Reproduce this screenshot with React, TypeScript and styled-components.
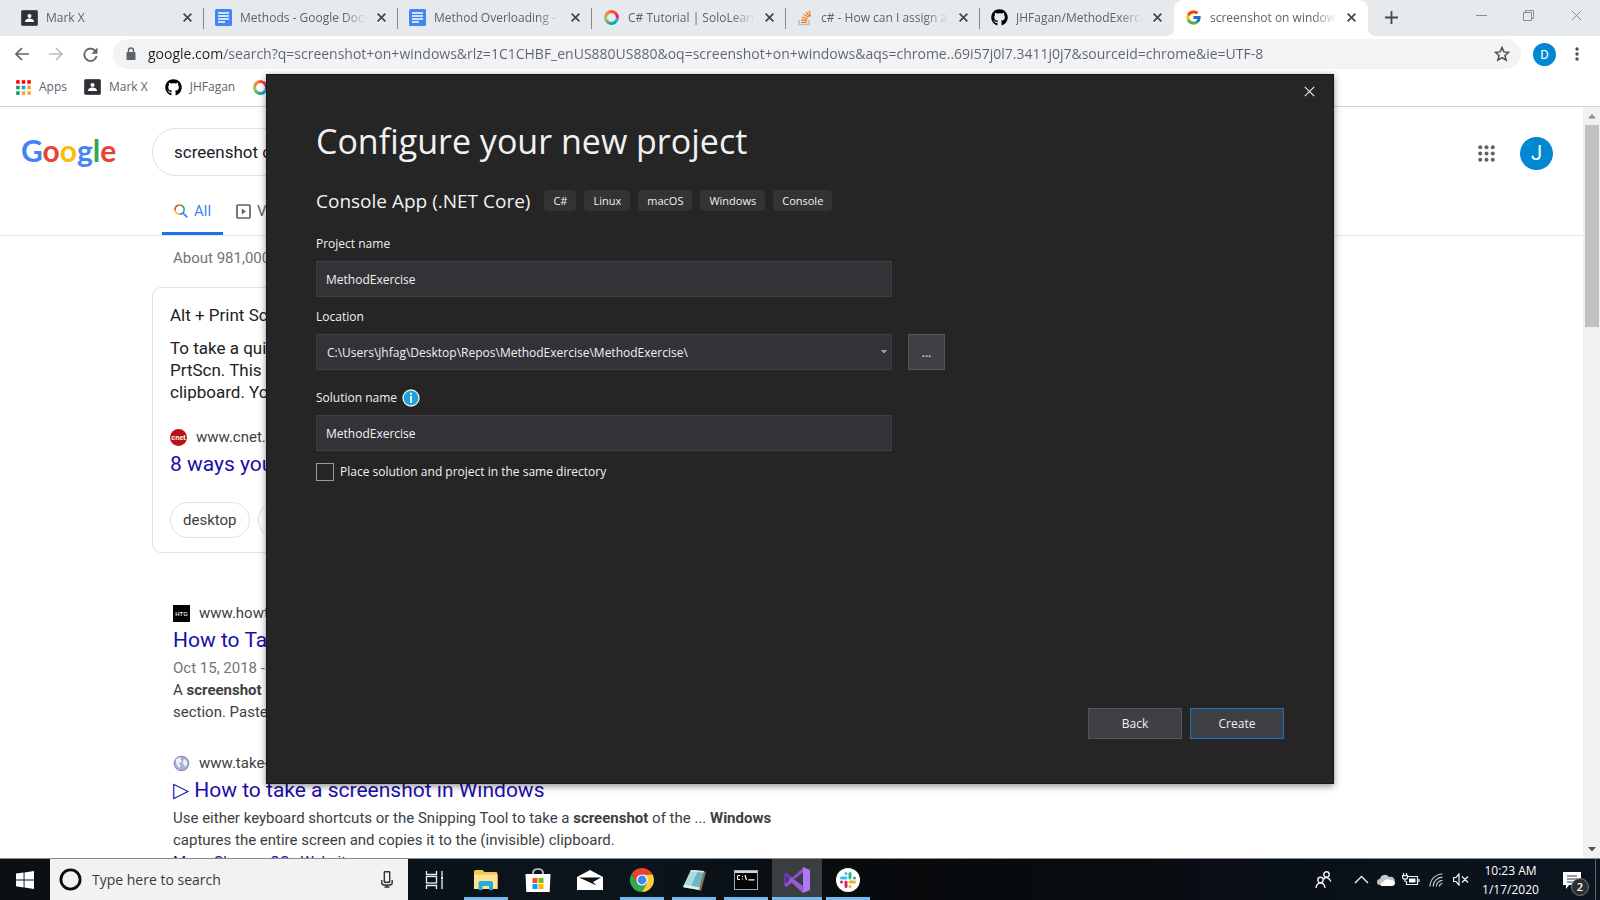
import React from "react";
import styled, { createGlobalStyle, css } from "styled-components";
import { FcGoogle } from "react-icons/fc";
import { FaGithub } from "react-icons/fa";

const segoe = `"Open Sans", "Noto Sans", sans-serif`;
const roboto = `Roboto, "Liberation Sans", sans-serif`;

const GlobalStyle = createGlobalStyle`
  * { box-sizing: border-box; }
  html, body { margin: 0; }
  body { font-family: ${segoe}; background: #fff; overflow: hidden; }
  button, input, select { font: inherit; margin: 0; }
  button { border: 0; padding: 0; background: none; cursor: pointer; }
  svg { display: block; flex: none; }
`;

const Desktop = styled.div`
  position: relative;
  display: flex;
  flex-direction: column;
  height: 100vh;
  min-height: 600px;
`;

/* ---------- Browser tabs ---------- */

const TabStrip = styled.nav`
  display: flex;
  flex: none;
  height: 36px;
  padding-left: 10px;
  background: #e7eaed;
`;

const Tab = styled.div<{ $active?: boolean; $plain?: boolean }>`
  position: relative;
  display: flex;
  align-items: center;
  flex: 0 1 194px;
  min-width: 0;
  gap: 8px;
  padding: 0 11px 1px;
  font-size: 12px;
  color: #5f6368;
  ${(p) =>
    !p.$active &&
    !p.$plain &&
    css`
      &::after {
        content: "";
        position: absolute;
        right: 0;
        top: 8px;
        height: 21px;
        width: 1px;
        background: #85898d;
      }
    `}
  ${(p) =>
    p.$active &&
    css`
      background: #fff;
      border-radius: 9px 9px 0 0;
      &::before,
      &::after {
        content: "";
        position: absolute;
        bottom: 0;
        width: 8px;
        height: 8px;
      }
      &::before {
        left: -8px;
        background: radial-gradient(circle at 0 0, #e7eaed 8px, #fff 8px);
      }
      &::after {
        right: -8px;
        background: radial-gradient(circle at 100% 0, #e7eaed 8px, #fff 8px);
      }
    `}
`;

const TabTitle = styled.a`
  flex: 1;
  min-width: 0;
  overflow: hidden;
  white-space: nowrap;
  line-height: 20px;
  color: inherit;
  text-decoration: none;
  mask-image: linear-gradient(90deg, #000 calc(100% - 24px), transparent);
`;

const IconButton = styled.button<{ $w?: number; $h?: number }>`
  display: flex;
  align-items: center;
  justify-content: center;
  flex: none;
  width: ${(p) => p.$w ?? 22}px;
  height: ${(p) => p.$h ?? 22}px;
`;

const WindowControls = styled.div`
  display: flex;
  margin-left: auto;
`;

/* ---------- Toolbar ---------- */

const Toolbar = styled.div`
  display: flex;
  align-items: center;
  flex: none;
  gap: 12px;
  height: 36px;
  padding: 0 14px 0 11px;
`;

const Omnibox = styled.form`
  display: flex;
  align-items: center;
  flex: 1;
  min-width: 0;
  height: 30px;
  padding: 0 11px;
  gap: 10px;
  border-radius: 15px;
  background: #f1f3f4;
`;

const UrlInput = styled.input`
  flex: 1;
  min-width: 0;
  padding: 0;
  border: 0;
  outline: 0;
  font-size: 14px;
  line-height: 24px;
  color: #5f6368;
  background: linear-gradient(90deg, #202124 76px, #5f6368 76px);
  background-clip: text;
  -webkit-text-fill-color: transparent;
`;

const Avatar = styled.button<{ $size: number }>`
  flex: none;
  width: ${(p) => p.$size}px;
  height: ${(p) => p.$size}px;
  border-radius: 50%;
  background: #0288d1;
  color: #fff;
  font-family: ${roboto};
  font-size: ${(p) => (p.$size > 30 ? 20 : 13)}px;
`;

const Bookmarks = styled.nav`
  display: flex;
  align-items: center;
  flex: none;
  height: 35px;
  padding: 0 16px 4px;
  gap: 17px;
  border-bottom: 1px solid #d0d2d8;
`;

const Bookmark = styled.a`
  display: flex;
  align-items: center;
  gap: 8px;
  font-size: 12px;
  line-height: 20px;
  color: #5f6368;
  text-decoration: none;
`;

/* ---------- Search page ---------- */

const Viewport = styled.div`
  display: flex;
  flex: 1;
  min-height: 0;
`;

const Page = styled.main`
  flex: 1;
  min-width: 0;
  overflow: hidden;
  font-family: ${roboto};
`;

const PageHeader = styled.header`
  display: grid;
  grid-template-columns: 152px 1fr auto;
  border-bottom: 1px solid #e4e6e9;
  padding: 21px 30px 0 0;
`;

const Logo = styled.a`
  padding-left: 21px;
  font-family: Lato, sans-serif;
  font-size: 30px;
  font-weight: 700;
  line-height: 44px;
  text-decoration: none;
`;

const LogoLetter = styled.span<{ $color: string }>`
  color: ${(p) => p.$color};
`;

const SearchBox = styled.input`
  width: 100%;
  max-width: 808px;
  height: 48px;
  padding: 0 21px;
  border: 1px solid #dfe1e5;
  border-radius: 24px;
  outline: 0;
  font-size: 17px;
  color: #202124;
`;

const HeaderTools = styled.div`
  display: flex;
  align-items: center;
  gap: 23px;
  height: 50px;
`;

const SearchTabs = styled.nav`
  grid-column: 2;
  display: flex;
  gap: 1px;
  padding: 10px 0 0 10px;
`;

const SearchTab = styled.a<{ $active?: boolean }>`
  display: flex;
  align-items: center;
  gap: 6px;
  height: 47px;
  padding: 2px 12px 0;
  border-bottom: 3px solid ${(p) => (p.$active ? "#1a73e8" : "transparent")};
  font-size: 15px;
  color: ${(p) => (p.$active ? "#4285f4" : "#5f6368")};
  text-decoration: none;
`;

const Results = styled.section`
  width: 916px;
  max-width: 100%;
  padding-left: 152px;
`;

const Stats = styled.p`
  margin: 11px 0 18px 21px;
  font-size: 15px;
  line-height: 22px;
  color: #70757a;
`;

const Card = styled.article`
  height: 266px;
  padding: 16px 17px;
  border: 1px solid #dfe1e5;
  border-radius: 9px;
`;

const CardText = styled.p`
  margin: 0 0 11px;
  font-size: 17px;
  line-height: 22px;
  color: #222;
`;

const Source = styled.div`
  display: flex;
  align-items: center;
  gap: 9px;
  font-size: 15px;
  line-height: 24px;
  color: #3c4043;
`;

const ResultTitle = styled.a`
  display: block;
  font-size: 21px;
  line-height: 30px;
  color: #1a0dab;
  text-decoration: none;
`;

const CardSource = styled.div`
  padding-top: 11px;
`;

const Chips = styled.div`
  display: flex;
  gap: 8px;
  margin-top: 23px;
`;

const Chip = styled.button`
  height: 36px;
  padding: 0 12px;
  border: 1px solid #dfe1e5;
  border-radius: 18px;
  font-size: 15px;
  color: #3c4043;
`;

const Result = styled.article<{ $first?: boolean }>`
  margin: ${(p) => (p.$first ? 48 : 28)}px 0 0 21px;
`;

const Snippet = styled.p`
  margin: 2px 0 0;
  font-size: 15px;
  line-height: 22px;
  color: #3c4043;
`;

const Dim = styled.span`
  color: #70757a;
`;

const SiteLink = styled.a`
  color: #1a0dab;
  text-decoration: none;
`;

const Scrollbar = styled.div`
  display: flex;
  flex-direction: column;
  align-items: center;
  flex: none;
  width: 17px;
  background: #f1f1f1;
`;

const Thumb = styled.div`
  width: 14px;
  height: 202px;
  margin-bottom: auto;
  background: #c1c1c1;
`;

/* ---------- Project dialog ---------- */

const Dialog = styled.section`
  position: absolute;
  top: 74px;
  left: 0;
  right: 0;
  display: flex;
  flex-direction: column;
  width: 1068px;
  max-width: 100%;
  min-height: 710px;
  margin: 0 auto;
  padding: 4px 49px 44px;
  border: 1px solid #17171b;
  background: #252526;
  color: #f1f1f1;
  box-shadow: 0 2px 7px rgba(0, 0, 0, 0.45);
`;

const DialogTop = styled.div`
  display: flex;
  justify-content: flex-end;
  margin-right: -37px;
`;

const Heading = styled.h1`
  margin: 13px 0 20px;
  font-size: 34px;
  font-weight: 400;
  line-height: 50px;
`;

const TemplateRow = styled.div`
  display: flex;
  align-items: center;
  gap: 14px;
`;

const TemplateName = styled.h2`
  margin: 0;
  font-size: 19px;
  font-weight: 400;
  line-height: 30px;
`;

const Tags = styled.ul`
  display: flex;
  gap: 8px;
  margin: 0;
  padding: 0 0 2px;
  list-style: none;
`;

const Tag = styled.li`
  padding: 0 9px;
  border-radius: 4px;
  background: #333334;
  font-size: 11px;
  line-height: 21px;
`;

const FieldLabel = styled.label<{ $top: number }>`
  display: flex;
  align-items: center;
  gap: 5px;
  margin: ${(p) => p.$top}px 0 6px;
  font-size: 12px;
  line-height: 22px;
`;

const FieldRow = styled.div`
  display: flex;
  gap: 16px;
`;

const field = css`
  width: 576px;
  max-width: 100%;
  height: 36px;
  padding: 0 9px;
  border: 1px solid #3f3f46;
  border-radius: 0;
  outline: 0;
  background-color: #333337;
  color: #f1f1f1;
  font-size: 12px;
`;

const TextField = styled.input`
  ${field}
`;

const SelectField = styled.select`
  ${field}
  padding: 0 10px;
  appearance: none;
  background-image: linear-gradient(to bottom left, #999 50%, transparent 50%),
    linear-gradient(to bottom right, #999 50%, transparent 50%);
  background-size: 3px 4px;
  background-position: right 7px center, right 4px center;
  background-repeat: no-repeat;
`;

const DialogButton = styled.button<{ $w: number; $h: number; $primary?: boolean }>`
  width: ${(p) => p.$w}px;
  height: ${(p) => p.$h}px;
  border: 1px solid ${(p) => (p.$primary ? "#1a74c4" : "#555558")};
  background: #3f3f46;
  color: #f1f1f1;
  font-size: 12px;
`;

const CheckRow = styled.label`
  display: flex;
  align-items: center;
  gap: 6px;
  margin-top: 10px;
  font-size: 12px;
  line-height: 22px;
`;

const CheckBox = styled.input`
  appearance: none;
  width: 18px;
  height: 18px;
  border: 1px solid #999;
  background: #252526;
`;

const DialogActions = styled.div`
  display: flex;
  justify-content: flex-end;
  gap: 8px;
  margin-top: auto;
`;

/* ---------- Taskbar ---------- */

const Taskbar = styled.footer`
  display: flex;
  flex: none;
  height: 42px;
  border-top: 1px solid #8a8c8e;
  background: linear-gradient(90deg, #0a1014, #0b151c 40%, #07090b 57%, #0b1520);
  color: #fff;
`;

const TaskSearch = styled.label`
  display: flex;
  align-items: center;
  flex: none;
  width: 358px;
  padding: 0 15px 0 9px;
  gap: 10px;
  background: #f2f2f2;
`;

const TaskInput = styled.input`
  flex: 1;
  min-width: 0;
  padding: 0;
  border: 0;
  outline: 0;
  background: none;
  font-size: 14px;
  &::placeholder {
    color: #3a3a3a;
    opacity: 1;
  }
`;

const TaskApps = styled.div`
  display: flex;
`;

const TaskButton = styled.button<{ $open?: boolean; $active?: boolean }>`
  display: flex;
  align-items: center;
  justify-content: center;
  width: ${(p) => (p.$active ? 50 : 44)}px;
  margin: 0 ${(p) => (p.$active ? 0 : 4)}px;
  padding-top: 3px;
  border-bottom: 3px solid ${(p) => (p.$open ? "#76b9ed" : "transparent")};
  background: ${(p) => (p.$active ? "#3b3e40" : "transparent")};
`;

const Tray = styled.div`
  display: flex;
  align-items: center;
  gap: 5px;
  margin-left: auto;
`;

const Clock = styled.time`
  width: 69px;
  font-size: 12px;
  line-height: 19px;
  text-align: center;
  white-space: nowrap;
`;

const Notices = styled.button`
  position: relative;
  width: 34px;
  height: 30px;
  margin-left: 6px;
  padding: 3px 0 0 7px;
`;

const Badge = styled.span`
  position: absolute;
  right: 1px;
  bottom: -1px;
  width: 18px;
  height: 18px;
  border: 1px solid #777;
  border-radius: 50%;
  background: #2b2f33;
  color: #fff;
  font-size: 11px;
  font-weight: 600;
  line-height: 16px;
  text-align: center;
`;

const ShowDesktop = styled.button`
  align-self: stretch;
  width: 5px;
  border-left: 1px solid #59636b;
`;

/* ---------- Icons ---------- */

const ClassroomIcon = () => (
  <svg width="17" height="16" viewBox="0 0 17 16">
    <rect x="0.5" y="0.5" width="16" height="15" rx="1" fill="#2e3136" stroke="#4d5156" />
    <circle cx="8.500" cy="6" r="2" fill="#fff" />
    <path d="M4 12c0-2.500 2.500-3.400 4.500-3.400S13 9.500 13 12z" fill="#fff" />
  </svg>
);
const DocsIcon = () => (
  <svg width="17" height="17" viewBox="0 0 17 17">
    <rect width="17" height="17" rx="1.500" fill="#4285f4" />
    <path d="M3 4h11M3 7h11M3 10h11M3 13h7" stroke="#fff" strokeWidth="1.500" />
  </svg>
);
const SwirlIcon = () => (
  <svg width="17" height="17" viewBox="0 0 17 17" fill="none" strokeWidth="2.600">
    {["#ff7043", "#f4511e", "#ec407a", "#e91e63", "#29b6f6", "#00acc1", "#26a69a", "#66bb6a", "#9ccc65", "#f0883e"].map((c, i) => (
      <path key={c} d="M6 3.800q2.800-2.400 6.400-.2" stroke={c} transform={`rotate(${i * 36 - 20} 8.500 8.500)`} />
    ))}
  </svg>
);
const StackIcon = () => (
  <svg width="16" height="16" viewBox="0 0 16 16" fill="none">
    <path d="M2 10v4.500h10V10" stroke="#bcbbbb" strokeWidth="1.500" />
    <path d="M4 12.300h6M4.100 9.900l6 .6M4.900 7.200l5.700 1.600M6.500 4.300l5 3M9 1.800l3.500 4.700M12.200.8l1.200 5.600" stroke="#f48024" strokeWidth="1.300" />
  </svg>
);
const Cross = ({ size = 9, color = "#45494d", weight = 1.8 }: { size?: number; color?: string; weight?: number }) => (
  <svg width={size} height={size} viewBox="0 0 10 10">
    <path d="M0.700 0.700l8.600 8.600M9.300 0.700l-8.600 8.600" stroke={color} strokeWidth={(weight * 10) / size} />
  </svg>
);
const Arrow = ({ color, flip }: { color: string; flip?: boolean }) => (
  <svg width="14" height="14" viewBox="0 0 14 14" fill="none" stroke={color} strokeWidth="1.700">
    <path d={flip ? "M0 7h13M7 1l6 6-6 6" : "M14 7H1M7 1L1 7l6 6"} />
  </svg>
);
const ReloadIcon = () => (
  <svg width="15" height="15" viewBox="0 0 15 15" fill="none">
    <path d="M12.600 4.200A6.200 6.200 0 1 0 13.600 8.800" stroke="#5f6368" strokeWidth="1.800" />
    <path d="M14.500 0.500v6.200H8.300z" fill="#5f6368" />
  </svg>
);
const LockIcon = () => (
  <svg width="14" height="14" viewBox="0 0 14 14">
    <rect x="2.500" y="5" width="9" height="8" rx="1" fill="#5f6368" />
    <path d="M4.500 5.500V3.500a2.500 2.500 0 0 1 5 0v2" fill="none" stroke="#5f6368" strokeWidth="1.400" />
  </svg>
);
const StarIcon = () => (
  <svg width="16" height="16" viewBox="0 0 16 16">
    <path d="M8 1.500l1.900 4.400 4.700.4-3.600 3.100 1.100 4.700L8 11.600l-4.100 2.500L5 9.400 1.400 6.300l4.700-.4z" fill="none" stroke="#4a4d51" strokeWidth="1.500" />
  </svg>
);
const MoreIcon = () => (
  <svg width="4" height="16" viewBox="0 0 4 16" fill="#4a4d51">
    <circle cx="2" cy="3" r="1.700" /><circle cx="2" cy="8" r="1.700" /><circle cx="2" cy="13" r="1.700" />
  </svg>
);
const DotGrid = ({ size, colors, square }: { size: number; colors: string[]; square?: boolean }) => (
  <svg width={size} height={size} viewBox="0 0 17 17">
    {colors.map((c, i) => (
      <rect key={i} x={(i % 3) * 6.3 + 0.2} y={Math.floor(i / 3) * 6.3 + 0.2} width="4" height="4" rx={square ? 0 : 2} fill={c} />
    ))}
  </svg>
);
const LensIcon = () => (
  <svg width="14" height="14" viewBox="0 0 14 14" fill="none" strokeWidth="1.700">
    <path d="M1 6A4.600 4.600 0 0 1 5.500 1" stroke="#ea4335" />
    <path d="M5.500 1A4.600 4.600 0 0 1 10.200 5.600" stroke="#34a853" />
    <path d="M10.200 5.600A4.600 4.600 0 0 1 5.600 10.200M8.800 8.800l4.600 4.600" stroke="#4285f4" />
    <path d="M5.600 10.200A4.600 4.600 0 0 1 1 6" stroke="#fbbc05" />
  </svg>
);
const VideoIcon = () => (
  <svg width="15" height="15" viewBox="0 0 15 15">
    <rect x="1" y="1" width="13" height="13" rx="1" fill="none" stroke="#5f6368" strokeWidth="1.700" />
    <path d="M5.800 4.500v6l4.200-3z" fill="#5f6368" />
  </svg>
);
const CnetIcon = () => (
  <svg width="17" height="17" viewBox="0 0 17 17">
    <circle cx="8.500" cy="8.500" r="8.500" fill="#b71216" />
    <text x="8.500" y="11" fontSize="7" fontWeight="700" textAnchor="middle" fill="#fff" fontFamily="Liberation Sans">cnet</text>
  </svg>
);
const HtgIcon = () => (
  <svg width="17" height="17" viewBox="0 0 17 17">
    <rect width="17" height="17" fill="#000" />
    <text x="8.500" y="11" fontSize="6" fontWeight="700" textAnchor="middle" fill="#ddd" fontFamily="Liberation Sans">HTG</text>
  </svg>
);
const GlobeIcon = () => (
  <svg width="17" height="17" viewBox="0 0 17 17">
    <circle cx="8.500" cy="8.500" r="7.200" fill="#a9b2d6" stroke="#8790bd" strokeWidth="1.200" />
    <path d="M3 4.500c2-2 4-2.300 5-2l-.5 2L9 6 7 8 5.500 8l2 2.500L6.500 13C4 11 2.500 8 3 4.500zM11 4l2.500 1.500 1 3-2 3.500-1.500-2-1.500-2z" fill="#eff1fa" />
  </svg>
);
const InfoIcon = () => (
  <svg width="18" height="18" viewBox="0 0 18 18">
    <circle cx="9" cy="9" r="8" fill="#1ba1e2" stroke="#f1f1f1" strokeWidth="1.300" />
    <path d="M9 3.800v2M9 7v7" stroke="#fff" strokeWidth="2" />
  </svg>
);
const WindowsIcon = () => (
  <svg width="18" height="18" viewBox="0 0 18 18" fill="#fff">
    <path d="M0 2.600L7.600 1.500v7H0zM8.500 1.400L18 0v8.500H8.500zM0 9.400h7.600v7L0 15.300zM8.500 9.400H18V18l-9.500-1.400z" />
  </svg>
);
const CortanaIcon = () => (
  <svg width="23" height="23" viewBox="0 0 23 23">
    <circle cx="11.500" cy="11.500" r="9.600" fill="none" stroke="#0c0c0c" strokeWidth="2.800" />
  </svg>
);
const MicIcon = () => (
  <svg width="12" height="17" viewBox="0 0 12 17" fill="none" stroke="#333" strokeWidth="1.400">
    <rect x="3.300" y="0.800" width="5.400" height="10.500" rx="0.500" />
    <path d="M0.800 9v2.500c0 1.500 1 2.500 2.500 2.500h5.400c1.500 0 2.500-1 2.500-2.500V9M6 14v1.700M3.500 16h5" />
  </svg>
);
const TaskViewIcon = () => (
  <svg width="19" height="18" viewBox="0 0 19 18" fill="none" stroke="#f0f0f0" strokeWidth="1.300">
    <path d="M1.500 0v3.500h10V0M1.500 18v-3.500h10V18M17 0v5M17 9v9" />
    <rect x="1.500" y="5.500" width="10" height="6.500" />
    <rect x="16" y="5.500" width="2" height="3" fill="#f0f0f0" stroke="none" />
  </svg>
);
const ExplorerIcon = () => (
  <svg width="24" height="20" viewBox="0 0 24 20">
    <path d="M0 1.500Q0 0 1.500 0h7l2 2H22q1.500 0 1.500 1.500V19H0z" fill="#f3c74f" />
    <path d="M0 4.500h23.500V19H0z" fill="#ffe391" />
    <path d="M4.500 20v-7q0-2 2-2h10.500q2 0 2 2v7h-4v-4H8.500v4z" fill="#29abe2" />
  </svg>
);
const StoreIcon = () => (
  <svg width="26" height="24" viewBox="0 0 26 24">
    <path d="M8 7V5q0-4 5-4t5 4v2" fill="none" stroke="#c9cccf" strokeWidth="1.700" />
    <path d="M0.500 6h25l-.8 18H1.300z" fill="#fff" />
    <path d="M7.500 10h5v5h-5z" fill="#f25022" /><path d="M13.500 10h5v5h-5z" fill="#7fba00" />
    <path d="M7.500 16h5v5h-5z" fill="#00a4ef" /><path d="M13.500 16h5v5h-5z" fill="#ffb900" />
  </svg>
);
const MailIcon = () => (
  <svg width="26" height="20" viewBox="0 0 26 20">
    <path d="M0 7L13 0l13 7v13H0z" fill="#fff" />
    <path d="M2 7.500h22l-8 4.500 3.500 3.500z" fill="#0b1116" />
  </svg>
);
const ChromeIcon = () => (
  <svg width="24" height="24" viewBox="0 0 24 24">
    <path d="M12 6.500h10.700L22.400 6A12 12 0 0 0 1.600 6L7 15z" fill="#ea4335" />
    <path d="M1.600 6A12 12 0 0 0 12 24l5-9-10 0z" fill="#34a853" />
    <path d="M12 24A12 12 0 0 0 22.700 6.600H12L17 15z" fill="#fbcd3a" />
    <circle cx="12" cy="12" r="5.600" fill="#fff" /><circle cx="12" cy="12" r="4.400" fill="#4285f4" />
  </svg>
);
const NotepadIcon = () => (
  <svg width="24" height="24" viewBox="0 0 24 24">
    <path d="M21 3l3 1-5 19-3-1z" fill="#8a6b4a" />
    <path d="M9 2l13 1-5 19L1 19z" fill="#6fb5c4" />
    <path d="M9 2l7 .5L8 20.500 1 19z" fill="#a8dbe4" />
    <path d="M1 19l16 3 .6-2.500L3 16.500z" fill="#e3eef0" />
    <path d="M9 2l13 1-.4 1.500L8.300 3.500z" fill="#dfe6e8" />
  </svg>
);
const TerminalIcon = () => (
  <svg width="24" height="20" viewBox="0 0 24 20">
    <rect x="0.500" y="0.500" width="23" height="19" fill="#050505" stroke="#a5a8aa" />
    <path d="M1 2h22" stroke="#d5d8da" strokeWidth="2" />
    <path d="M6 5.500H4.500q-1 0-1 1.300v1.400q0 1.300 1 1.300H6M8.500 6v1M8.500 8.500v1M11 5l1.500 5M14.500 9.800h6" stroke="#fff" strokeWidth="1.200" fill="none" />
  </svg>
);
const StudioIcon = () => (
  <svg width="26" height="26" viewBox="0 0 26 26">
    <path d="M0 7l2-1.500L20 20v4z" fill="#7b3fb5" />
    <path d="M0 7l2.500-1.500V20L0 18z" fill="#6a35a3" />
    <path d="M2.500 20L20 6V0L0 18z" fill="#8e52cc" />
    <path d="M19 0l7 3v20l-7 3z" fill="#b179f1" />
    <path d="M9 13l10-7.500v15z" fill="#3b3e40" />
    <path d="M19 26L4.500 12.800l3-2.300L20 20z" fill="#9a5cd8" />
  </svg>
);
const SlackIcon = () => (
  <svg width="24" height="24" viewBox="0 0 24 24" strokeLinecap="round" strokeWidth="3">
    <circle cx="12" cy="12" r="12" fill="#fff" />
    <path d="M10 5.500v.1M5.500 10H10" stroke="#36c5f0" />
    <path d="M14 5.500V10M18.500 10h-.1" stroke="#2eb67d" />
    <path d="M14 14h4.500M14 18.500v-.1" stroke="#ecb22e" />
    <path d="M10 14v4.500M5.500 14h.1" stroke="#e01e5a" />
  </svg>
);
const PeopleIcon = () => (
  <svg width="17" height="18" viewBox="0 0 17 18" fill="none" stroke="#f0f0f0" strokeWidth="1.400">
    <circle cx="11.500" cy="3.500" r="2.700" /><circle cx="5.500" cy="9" r="2.700" />
    <path d="M8.500 8.500q1-2 3-2t4.500 4M1 17q.5-5 4.500-5t4.500 5" />
  </svg>
);
const ChevronIcon = () => (
  <svg width="15" height="9" viewBox="0 0 15 9" fill="none" stroke="#f0f0f0" strokeWidth="1.400">
    <path d="M1 8l6.500-6.500L14 8" />
  </svg>
);
const CloudIcon = () => (
  <svg width="18" height="12" viewBox="0 0 18 12">
    <path d="M3 11a3 3 0 0 1 0-6A5 5 0 0 1 12 3a4 4 0 0 1 3 8z" fill="#c4c7ca" />
    <path d="M4 12q-1.500-3 2-4 3-4 7-2 5 0 5 3.500-.5 2.500-3 2.500z" fill="#fff" />
  </svg>
);
const BatteryIcon = () => (
  <svg width="18" height="13" viewBox="0 0 18 13" fill="none" stroke="#f0f0f0" strokeWidth="1.200">
    <path d="M6 3.500h9.500v8H4.500V8M17 6v3M1.500 0v2.500M4.500 0v2.500M.6 2.700h5v2q-.5 1.500-2.500 1.500T.6 4.700zM3 6v3" />
    <path d="M7 5.500h6.500v4H7z" fill="#fff" stroke="none" />
  </svg>
);
const WifiIcon = () => (
  <svg width="15" height="14" viewBox="0 0 15 14" fill="none" stroke="#c8cbcd" strokeWidth="1.200">
    <path d="M1 13.500A12.500 12.500 0 0 1 13.500 1M4.200 13.500a9.300 9.300 0 0 1 9.300-9.300M7.400 13.500a6.100 6.100 0 0 1 6.100-6.100M10.500 13.500a3 3 0 0 1 3-3" />
  </svg>
);
const MutedIcon = () => (
  <svg width="17" height="13" viewBox="0 0 17 13" fill="none" stroke="#f0f0f0" strokeWidth="1.200">
    <path d="M.6 4.500H3L6 1v11L3 8.500H.6zM9 3.500l6 6M15 3.500l-6 6" />
  </svg>
);
const NoteIcon = () => (
  <svg width="19" height="18" viewBox="0 0 19 18">
    <path d="M0 0h18v13H6l-3 4v-4H0z" fill="#fff" />
    <path d="M4 4h10M4 7h10M4 10h7" stroke="#333" strokeWidth="1" />
  </svg>
);
const Caret = ({ down }: { down?: boolean }) => (
  <svg width="8" height="5" viewBox="0 0 8 5"><path d={down ? "M0 0h8L4 4.500z" : "M0 4.500h8L4 0z"} fill={down ? "#505050" : "#8a8a8a"} /></svg>
);

/* ---------- Data ---------- */

const tabs = [
  { title: "Mark X", icon: <ClassroomIcon /> },
  { title: "Methods - Google Docs", icon: <DocsIcon /> },
  { title: "Method Overloading - Goo", icon: <DocsIcon /> },
  { title: "C# Tutorial | SoloLearn: Le", icon: <SwirlIcon /> },
  { title: "c# - How can I assign a va", icon: <StackIcon /> },
  { title: "JHFagan/MethodExercise", icon: <FaGithub size={17} color="#000" />, plain: true },
  { title: "screenshot on windows -", icon: <FcGoogle size={17} />, active: true },
];

const logo: [string, string][] = [
  ["G", "#4285f4"], ["o", "#ea4335"], ["o", "#fbbc05"], ["g", "#4285f4"], ["l", "#34a853"], ["e", "#ea4335"],
];

const appColors = ["#f00", "#f00", "#f00", "#0f9d58", "#2196f3", "#f9a825", "#0f9d58", "#f9a825", "#f9a825"];

const apps = [
  { name: "Task View", icon: <TaskViewIcon /> },
  { name: "File Explorer", icon: <ExplorerIcon />, open: true },
  { name: "Store", icon: <StoreIcon /> },
  { name: "Mail", icon: <MailIcon /> },
  { name: "Chrome", icon: <ChromeIcon />, open: true },
  { name: "Notepad", icon: <NotepadIcon />, open: true },
  { name: "Command Prompt", icon: <TerminalIcon />, open: true },
  { name: "Visual Studio", icon: <StudioIcon />, open: true, active: true },
  { name: "Slack", icon: <SlackIcon />, open: true },
];

const url =
  "google.com/search?q=screenshot+on+windows&rlz=1C1CHBF_enUS880US880&oq=screenshot+on+windows&aqs=chrome..69i57j0l7.3411j0j7&sourceid=chrome&ie=UTF-8";

/* ---------- Sections ---------- */

const BrowserChrome = () => (
  <>
    <TabStrip aria-label="Tabs">
      {tabs.map((t) => (
        <Tab key={t.title} $active={t.active} $plain={t.plain}>
          {t.icon}
          <TabTitle href="#">{t.title}</TabTitle>
          <IconButton $w={12} aria-label="Close tab"><Cross /></IconButton>
        </Tab>
      ))}
      <IconButton $w={46} $h={35} aria-label="New tab">
        <svg width="13" height="13" viewBox="0 0 13 13"><path d="M6.500 0v13M0 6.500h13" stroke="#45494d" strokeWidth="1.800" /></svg>
      </IconButton>
      <WindowControls>
        <IconButton $w={47} $h={31} aria-label="Minimize">
          <svg width="11" height="10" viewBox="0 0 11 10"><path d="M0 4.500h11" stroke="#8b8e91" /></svg>
        </IconButton>
        <IconButton $w={47} $h={31} aria-label="Restore">
          <svg width="11" height="11" viewBox="0 0 11 11" fill="none" stroke="#8b8e91"><path d="M2.500 2.500v-2h8v8h-2M.5 2.500h8v8h-8z" /></svg>
        </IconButton>
        <IconButton $w={48} $h={31} aria-label="Close window"><Cross size={11} color="#8b8e91" weight={1} /></IconButton>
      </WindowControls>
    </TabStrip>
    <Toolbar>
      <IconButton aria-label="Back"><Arrow color="#5f6368" /></IconButton>
      <IconButton aria-label="Forward"><Arrow color="#bbbdbf" flip /></IconButton>
      <IconButton aria-label="Reload"><ReloadIcon /></IconButton>
      <Omnibox>
        <LockIcon />
        <UrlInput aria-label="Address" defaultValue={url} />
        <IconButton $w={16} type="button" aria-label="Bookmark this page"><StarIcon /></IconButton>
      </Omnibox>
      <Avatar $size={23} aria-label="Profile D">D</Avatar>
      <IconButton $w={18} aria-label="Menu"><MoreIcon /></IconButton>
    </Toolbar>
    <Bookmarks aria-label="Bookmarks">
      <Bookmark href="#"><DotGrid size={15} colors={appColors} square />Apps</Bookmark>
      <Bookmark href="#"><ClassroomIcon />Mark X</Bookmark>
      <Bookmark href="#"><FaGithub size={17} color="#000" />JHFagan</Bookmark>
      <Bookmark href="#" aria-label="SoloLearn"><SwirlIcon /></Bookmark>
    </Bookmarks>
  </>
);

const SearchPage = () => (
  <Viewport>
    <Page>
      <PageHeader>
        <Logo href="#">
          {logo.map(([l, c], i) => <LogoLetter key={i} $color={c}>{l}</LogoLetter>)}
        </Logo>
        <SearchBox aria-label="Search" defaultValue="screenshot on windows" />
        <HeaderTools>
          <IconButton aria-label="Google apps"><DotGrid size={17} colors={Array(9).fill("#5f6368")} /></IconButton>
          <Avatar $size={33} aria-label="Account J">J</Avatar>
        </HeaderTools>
        <SearchTabs aria-label="Result types">
          <SearchTab href="#" $active><LensIcon />All</SearchTab>
          <SearchTab href="#"><VideoIcon />Videos</SearchTab>
        </SearchTabs>
      </PageHeader>
      <Results>
        <Stats>About 981,000,000</Stats>
        <Card>
          <CardText>Alt + Print Screen</CardText>
          <CardText>
            To take a quick<br />
            PrtScn. This will<br />
            clipboard. You
          </CardText>
          <CardSource>
            <Source><CnetIcon />www.cnet.com</Source>
            <ResultTitle href="#">8 ways you can</ResultTitle>
          </CardSource>
          <Chips>
            <Chip>desktop</Chip>
            <Chip>pc</Chip>
          </Chips>
        </Card>
        <Result $first>
          <Source><HtgIcon />www.howtogeek</Source>
          <ResultTitle href="#">How to Take</ResultTitle>
          <Snippet>
            <Dim>Oct 15, 2018 -</Dim><br />
            A <b>screenshot</b> of<br />
            section. Paste it
          </Snippet>
        </Result>
        <Result>
          <Source><GlobeIcon />www.take-a</Source>
          <ResultTitle href="#">▷ How to take a screenshot in Windows</ResultTitle>
          <Snippet>
            Use either keyboard shortcuts or the Snipping Tool to take a <b>screenshot</b> of the ... <b>Windows</b><br />
            captures the entire screen and copies it to the (invisible) clipboard.<br />
            <SiteLink href="#">Mac · Chrome OS · Website</SiteLink>
          </Snippet>
        </Result>
      </Results>
    </Page>
    <Scrollbar>
      <IconButton $w={17} $h={18} aria-label="Scroll up"><Caret /></IconButton>
      <Thumb />
      <IconButton $w={17} $h={17} aria-label="Scroll down"><Caret down /></IconButton>
    </Scrollbar>
  </Viewport>
);

const ProjectDialog = () => (
  <Dialog role="dialog" aria-labelledby="dialog-title">
    <DialogTop>
      <IconButton $w={24} $h={24} aria-label="Close"><Cross size={11} color="#f1f1f1" weight={1.1} /></IconButton>
    </DialogTop>
    <Heading id="dialog-title">Configure your new project</Heading>
    <TemplateRow>
      <TemplateName>Console App (.NET Core)</TemplateName>
      <Tags>
        {["C#", "Linux", "macOS", "Windows", "Console"].map((t) => <Tag key={t}>{t}</Tag>)}
      </Tags>
    </TemplateRow>
    <FieldLabel $top={17} htmlFor="project">Project name</FieldLabel>
    <TextField id="project" defaultValue="MethodExercise" />
    <FieldLabel $top={9} htmlFor="location">Location</FieldLabel>
    <FieldRow>
      <SelectField id="location">
        <option>C:\Users\jhfag\Desktop\Repos\MethodExercise\MethodExercise\</option>
      </SelectField>
      <DialogButton $w={37} $h={36}>...</DialogButton>
    </FieldRow>
    <FieldLabel $top={17} htmlFor="solution">Solution name<InfoIcon /></FieldLabel>
    <TextField id="solution" defaultValue="MethodExercise" />
    <CheckRow><CheckBox type="checkbox" />Place solution and project in the same directory</CheckRow>
    <DialogActions>
      <DialogButton $w={94} $h={31}>Back</DialogButton>
      <DialogButton $w={94} $h={31} $primary>Create</DialogButton>
    </DialogActions>
  </Dialog>
);

const WindowsTaskbar = () => (
  <Taskbar>
    <IconButton $w={50} $h={41} aria-label="Start"><WindowsIcon /></IconButton>
    <TaskSearch>
      <CortanaIcon />
      <TaskInput aria-label="Search" placeholder="Type here to search" />
      <MicIcon />
    </TaskSearch>
    <TaskApps>
      {apps.map((a) => (
        <TaskButton key={a.name} aria-label={a.name} $open={a.open} $active={a.active}>{a.icon}</TaskButton>
      ))}
    </TaskApps>
    <Tray>
      <IconButton $w={46} aria-label="People"><PeopleIcon /></IconButton>
      <IconButton $w={20} aria-label="Show hidden icons"><ChevronIcon /></IconButton>
      <IconButton $w={20} aria-label="OneDrive"><CloudIcon /></IconButton>
      <IconButton $w={20} aria-label="Battery"><BatteryIcon /></IconButton>
      <IconButton $w={20} aria-label="Network"><WifiIcon /></IconButton>
      <IconButton $w={20} aria-label="Volume"><MutedIcon /></IconButton>
      <Clock>10:23 AM<br />1/17/2020</Clock>
      <Notices aria-label="Notifications"><NoteIcon /><Badge>2</Badge></Notices>
      <ShowDesktop aria-label="Show desktop" />
    </Tray>
  </Taskbar>
);

export default function App() {
  return (
    <Desktop>
      <GlobalStyle />
      <BrowserChrome />
      <SearchPage />
      <WindowsTaskbar />
      <ProjectDialog />
    </Desktop>
  );
}
